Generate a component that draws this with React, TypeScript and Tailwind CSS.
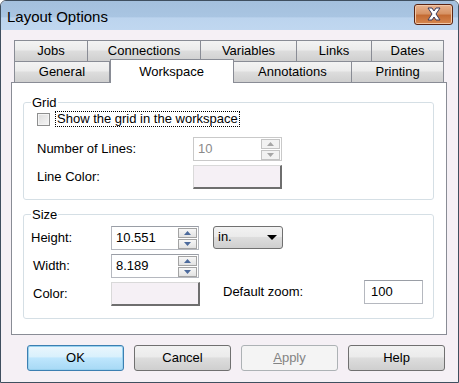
import React from "react";

const font = { fontFamily: '"Liberation Sans", Arial, sans-serif' };

function Arrow({ up, color }: { up?: boolean; color: string }) {
    return (
        <svg width="7" height="4" viewBox="0 0 7 4">
            <polygon points={up ? "3.5,0 7,4 0,4" : "0,0 7,0 3.5,4"} fill={color} />
        </svg>
    );
}

function Spinner({ disabled }: { disabled?: boolean }) {
    const arrow = disabled ? "#a6a6a6" : "#4c6a9c";
    const btn = disabled
        ? "border-[#c4c4c4] bg-[#f2f2f2]"
        : "border-[#a3a3a3] bg-[linear-gradient(#f7f7f7,#e2e2e2)]";
    return (
        <div className="flex flex-col w-[19px] gap-[1px]">
            <div className={`h-[10px] border ${btn} flex items-center justify-center`}>
                <Arrow up color={arrow} />
            </div>
            <div className={`h-[10px] border ${btn} flex items-center justify-center`}>
                <Arrow color={arrow} />
            </div>
        </div>
    );
}

function SpinInput({ value, disabled, width }: { value: string; disabled?: boolean; width: string }) {
    return (
        <div
            className={`${width} h-[24px] flex items-center justify-between bg-white border pl-[4px] pr-[1px] ${
                disabled ? "border-[#c9c9c9] text-[#8a8a8a]" : "border-[#b5b8bf] border-t-[#9a9ea6] text-black"
            }`}
        >
            <span>{value}</span>
            <Spinner disabled={disabled} />
        </div>
    );
}

function ColorButton({ width }: { width: string }) {
    return (
        <div
            className={`${width} h-[24px] bg-[#f5f0f5] border border-[#d9d9d9] border-r-[#6e6e6e] border-b-[#6e6e6e] border-r-2 border-b-2`}
        />
    );
}

function Tab({ label, width, selected }: { label: string; width: string; selected?: boolean }) {
    if (selected) {
        return (
            <div
                className={`${width} h-[24px] -mt-[2px] relative z-10 bg-white border border-b-0 border-[#898c95] flex items-start justify-center pt-[2px] text-[13px]`}
            >
                {label}
            </div>
        );
    }
    return (
        <div
            className={`${width} h-[21px] border border-b-0 border-[#898c95] -ml-px first:ml-0 bg-[linear-gradient(#f3f3f3_0%,#ebebeb_45%,#dddddd_50%,#cfcfcf_100%)] flex items-center justify-center text-[13px]`}
        >
            {label}
        </div>
    );
}

function DialogButton({ label, variant }: { label: React.ReactNode; variant?: "default" | "disabled" }) {
    const styles =
        variant === "default"
            ? "border-[#3c7fb1] bg-[linear-gradient(#eaf6fd_0%,#d9f0fc_45%,#bee6fd_50%,#a7d9f5_100%)] shadow-[inset_0_0_0_1px_#98d1ef]"
            : variant === "disabled"
            ? "border-[#adb2b5] bg-[#f4f4f4] text-[#838383]"
            : "border-[#707070] bg-[linear-gradient(#f2f2f2_0%,#ebebeb_45%,#dddddd_50%,#cfcfcf_100%)]";
    return (
        <div className={`w-[97px] h-[26px] rounded-[3px] border flex items-center justify-center text-[13px] ${styles}`}>
            {label}
        </div>
    );
}

export default function App() {
    return (
        <div
            style={font}
            className="w-[459px] h-[383px] bg-[#f5f0f5] border border-[#3f4f5f] rounded-t-[6px] overflow-hidden flex flex-col text-[13px] text-black"
        >
            {/* title bar */}
            <div className="h-[29px] shrink-0 flex items-center justify-between pl-[6px] pr-[5px] bg-[linear-gradient(#a4c0dd_0%,#a9c5e2_55%,#bcd4ee_58%,#c0d7f0_100%)]">
                <span className="text-[15px] leading-none mt-[1px]">Layout Options</span>
                <div className="w-[39px] h-[21px] -mt-[3px] rounded-[3px] border border-[#5b2412] bg-[linear-gradient(#e8b28e_0%,#d79365_45%,#c46b33_55%,#d7874f_100%)] flex items-center justify-center shadow-[inset_0_0_0_1px_#f0c7a8]">
                    <svg width="16" height="14" viewBox="0 0 16 14">
                        <path
                            d="M2 1 L6 1 L8 4 L10 1 L14 1 L10 7 L14 13 L10 13 L8 10 L6 13 L2 13 L6 7 Z"
                            fill="#ffffff"
                            stroke="#3a3a5a"
                            strokeWidth="1"
                            strokeLinejoin="round"
                        />
                    </svg>
                </div>
            </div>

            {/* tabs */}
            <div className="ml-[13px] mt-[10px] w-[430px] flex flex-col">
                <div className="flex">
                    <Tab label="Jobs" width="w-[74px]" />
                    <Tab label="Connections" width="w-[114px]" />
                    <Tab label="Variables" width="w-[97px]" />
                    <Tab label="Links" width="w-[76px]" />
                    <Tab label="Dates" width="w-[73px]" />
                </div>
                <div className="flex h-[21px]">
                    <Tab label="General" width="w-[96px]" />
                    <Tab label="Workspace" width="w-[124px]" selected />
                    <Tab label="Annotations" width="w-[120px]" />
                    <Tab label="Printing" width="w-[93px]" />
                </div>
            </div>

            {/* panel */}
            <div className="ml-[10px] w-[436px] h-[253px] shrink-0 border border-[#898c95] bg-white flex flex-col">
                <fieldset className="ml-[11px] mt-[12px] w-[411px] border border-[#d5dfe5] rounded-[3px] pb-[10px]">
                    <legend className="ml-[7px] px-[1px] leading-[15px]">Grid</legend>
                    <div className="flex items-center mt-[1px] ml-[13px] h-[16px]">
                        <div className="w-[13px] h-[13px] border border-[#8e8f8f] bg-[linear-gradient(135deg,#dcdcdc,#f6f6f6)] shadow-[inset_0_0_0_1px_#f4f4f4]" />
                        <div className="ml-[5px] h-[16px] px-[1px] border border-dotted border-black flex items-center">
                            Show the grid in the workspace
                        </div>
                    </div>
                    <div className="flex items-center mt-[10px] ml-[13px]">
                        <span className="w-[156px]">Number of Lines:</span>
                        <SpinInput value="10" disabled width="w-[89px]" />
                    </div>
                    <div className="flex items-center mt-[4px] ml-[13px]">
                        <span className="w-[156px]">Line Color:</span>
                        <ColorButton width="w-[89px]" />
                    </div>
                </fieldset>

                <fieldset className="ml-[11px] mt-[7px] w-[411px] border border-[#d5dfe5] rounded-[3px] pb-[12px]">
                    <legend className="ml-[7px] px-[1px] leading-[15px]">Size</legend>
                    <div className="flex items-center mt-[4px] ml-[7px]">
                        <span className="w-[80px]">Height:</span>
                        <SpinInput value="10.551" width="w-[88px]" />
                        <div className="ml-[14px] -mt-[2px] w-[70px] h-[23px] rounded-[3px] border border-[#707070] bg-[linear-gradient(#f2f2f2_0%,#ebebeb_45%,#dddddd_50%,#cfcfcf_100%)] flex items-center justify-between pl-[4px] pr-[5px]">
                            <span>in.</span>
                            <svg width="10" height="5" viewBox="0 0 10 5">
                                <polygon points="0,0 10,0 5,5" fill="#000" />
                            </svg>
                        </div>
                    </div>
                    <div className="flex items-center mt-[4px] ml-[9px]">
                        <span className="w-[78px]">Width:</span>
                        <SpinInput value="8.189" width="w-[88px]" />
                    </div>
                    <div className="flex items-center mt-[4px] ml-[9px]">
                        <span className="w-[78px]">Color:</span>
                        <ColorButton width="w-[89px]" />
                        <span className="ml-[23px] w-[141px] -mt-[4px]">Default zoom:</span>
                        <div className="w-[59px] h-[24px] -mt-[4px] border border-[#b5b8bf] border-t-[#9a9ea6] bg-white flex items-center pl-[6px]">
                            100
                        </div>
                    </div>
                </fieldset>
            </div>

            {/* buttons */}
            <div className="flex mt-[10px] ml-[26px] gap-[10px]">
                <DialogButton label="OK" variant="default" />
                <DialogButton label="Cancel" />
                <DialogButton
                    label={
                        <span>
                            <span className="underline">A</span>pply
                        </span>
                    }
                    variant="disabled"
                />
                <DialogButton label="Help" />
            </div>
        </div>
    );
}
